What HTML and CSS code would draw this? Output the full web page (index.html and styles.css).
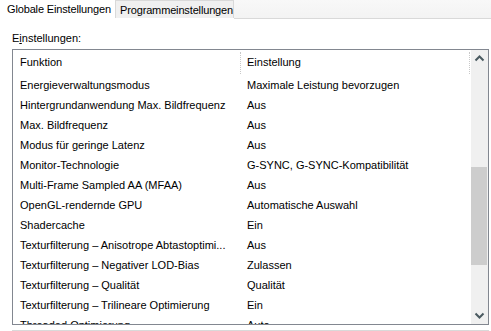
FILE: index.html
```html
<!DOCTYPE html>
<html>
<head>
  <title>NVIDIA Systemsteuerung</title>
  <link rel="stylesheet" href="styles.css">
</head>
<body>
  <div class="tabs">
    <div class="tab active">Globale Einstellungen</div>
    <div class="tab">Programmeinstellungen</div>
    <div class="tab-rest"></div>
  </div>
  <div class="page">
    <div class="caption">E<u>i</u>nstellungen:</div>
    <div class="listbox">
      <div class="list">
        <div class="row head">
          <div class="cell name">Funktion</div>
          <div class="cell value">Einstellung</div>
        </div>
        <div class="row"><div class="cell name">Energieverwaltungsmodus</div><div class="cell value">Maximale Leistung bevorzugen</div></div>
        <div class="row"><div class="cell name">Hintergrundanwendung Max. Bildfrequenz</div><div class="cell value">Aus</div></div>
        <div class="row"><div class="cell name">Max. Bildfrequenz</div><div class="cell value">Aus</div></div>
        <div class="row"><div class="cell name">Modus für geringe Latenz</div><div class="cell value">Aus</div></div>
        <div class="row"><div class="cell name">Monitor-Technologie</div><div class="cell value">G-SYNC, G-SYNC-Kompatibilität</div></div>
        <div class="row"><div class="cell name">Multi-Frame Sampled AA (MFAA)</div><div class="cell value">Aus</div></div>
        <div class="row"><div class="cell name">OpenGL-rendernde GPU</div><div class="cell value">Automatische Auswahl</div></div>
        <div class="row"><div class="cell name">Shadercache</div><div class="cell value">Ein</div></div>
        <div class="row"><div class="cell name">Texturfilterung – Anisotrope Abtastoptimi...</div><div class="cell value">Aus</div></div>
        <div class="row"><div class="cell name">Texturfilterung – Negativer LOD-Bias</div><div class="cell value">Zulassen</div></div>
        <div class="row"><div class="cell name">Texturfilterung – Qualität</div><div class="cell value">Qualität</div></div>
        <div class="row"><div class="cell name">Texturfilterung – Trilineare Optimierung</div><div class="cell value">Ein</div></div>
        <div class="row"><div class="cell name">Threaded Optimierung</div><div class="cell value">Auto</div></div>
      </div>
      <div class="scrollbar">
        <svg class="arrow" width="17" height="17" viewBox="0 0 17 17"><path d="M4.5 10.5 L8.5 6.5 L12.5 10.5" fill="none" stroke="#4a5a60" stroke-width="2"/></svg>
        <div class="track">
          <div class="thumb"></div>
        </div>
        <svg class="arrow" width="17" height="17" viewBox="0 0 17 17"><path d="M4.5 6.5 L8.5 10.5 L12.5 6.5" fill="none" stroke="#4a5a60" stroke-width="2"/></svg>
      </div>
    </div>
    <div class="footer-line"></div>
  </div>
</body>
</html>
```

FILE: styles.css
```css
body {
  margin: 0;
  font-family: "Liberation Sans", Arial, sans-serif;
  font-size: 11px;
  color: #000;
  background-color: #fff;
  overflow: hidden;
}

.tabs {
  display: flex;
  height: 19px;
}

.tab {
  font-size: 11px;
  letter-spacing: -0.15px;
  line-height: 18px;
  white-space: nowrap;
  box-sizing: border-box;
}

.tab.active {
  width: 115px;
  padding-left: 7px;
  background-color: #fff;
}

.tab:not(.active) {
  width: 119px;
  height: 18px;
  background-color: #f0f0f0;
  border: 1px solid #d9d9d9;
  border-bottom: none;
  padding-left: 4px;
}

.tab-rest {
  flex: 1;
  height: 18px;
  border-bottom: 1px solid #d9d9d9;
  background: linear-gradient(#f8f8f8, #f3f3f3);
}

.page {
  padding: 12px 0 0 12px;
}

.caption {
  height: 18px;
  line-height: 14px;
}

.listbox {
  display: flex;
  width: 477px;
  height: 276px;
  border: 1px solid #828790;
  box-sizing: border-box;
  overflow: hidden;
}

.list {
  flex: 1;
  padding-right: 1px;
}

.row {
  display: flex;
  height: 20px;
  line-height: 20px;
}

.row.head {
  height: 25px;
}

.cell {
  white-space: nowrap;
  overflow: hidden;
}

.name {
  width: 228px;
  padding-left: 7px;
  box-sizing: border-box;
}

.value {
  flex: 1;
  padding-left: 6px;
}

.head .cell {
  border-right: 1px dotted #c8c8c8;
  margin: 2px 0 1px;
  line-height: 21px;
}

.scrollbar {
  width: 17px;
  background-color: #f0f0f0;
  display: flex;
  flex-direction: column;
}

.arrow {
  display: block;
}

.track {
  flex: 1;
  padding-top: 100px;
}

.thumb {
  height: 98px;
  margin-right: 1px;
  background-color: #cdcdcd;
}

.footer-line {
  height: 1px;
  margin-top: 5px;
  width: 477px;
  background-color: #d9d9d9;
}
```
